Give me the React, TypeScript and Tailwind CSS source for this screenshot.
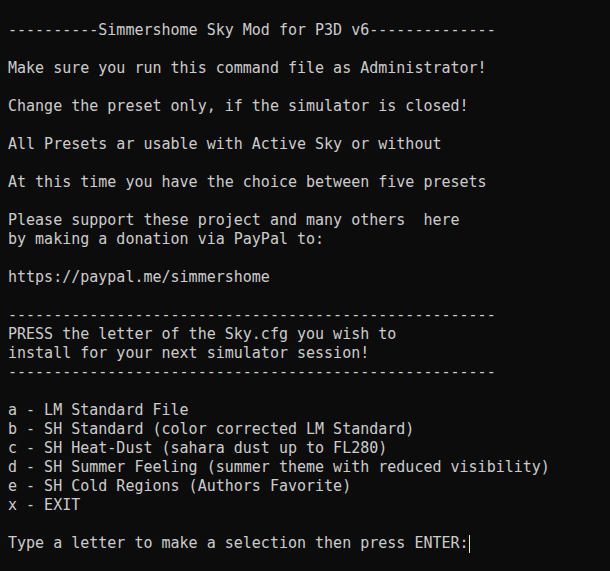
import React from 'react';

const lines = [
  '',
  '----------Simmershome Sky Mod for P3D v6--------------',
  '',
  'Make sure you run this command file as Administrator!',
  '',
  'Change the preset only, if the simulator is closed!',
  '',
  'All Presets ar usable with Active Sky or without',
  '',
  'At this time you have the choice between five presets',
  '',
  'Please support these project and many others  here',
  'by making a donation via PayPal to:',
  '',
  'https://paypal.me/simmershome',
  '',
  '------------------------------------------------------',
  'PRESS the letter of the Sky.cfg you wish to',
  'install for your next simulator session!',
  '------------------------------------------------------',
  '',
  'a - LM Standard File',
  'b - SH Standard (color corrected LM Standard)',
  'c - SH Heat-Dust (sahara dust up to FL280)',
  'd - SH Summer Feeling (summer theme with reduced visibility)',
  'e - SH Cold Regions (Authors Favorite)',
  'x - EXIT',
  '',
];

export default function App() {
  return (
    <div className="w-[610px] h-[571px] overflow-hidden bg-[#0c0c0c] text-[#cccccc] pl-2 pt-[2px] font-['DejaVu_Sans_Mono',monospace] text-[15px] leading-[19px]">
      {lines.map((line, i) => (
        <div key={i} className="h-[19px] whitespace-pre">
          {line}
        </div>
      ))}
      <div className="h-[19px] whitespace-pre flex items-center">
        <span>Type a letter to make a selection then press ENTER:</span>
        <span className="inline-block w-px h-[18px] bg-[#e6e6e6]" />
      </div>
    </div>
  );
}
